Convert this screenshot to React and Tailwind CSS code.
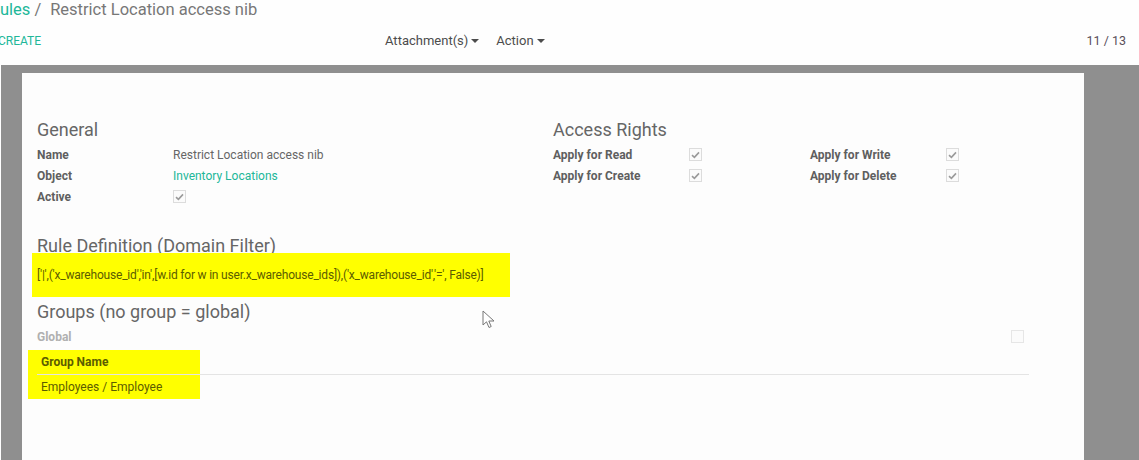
import React from "react";

function Check({ on = true, faint = false }) {
  return (
    <div
      className={`w-[13px] h-[13px] border ${faint ? "border-[#e6e6e6]" : "border-[#dcdcdc]"} bg-[#fbfbfb] flex items-center justify-center`}
    >
      {on && (
        <svg width="9" height="8" viewBox="0 0 9 8">
          <path d="M1 4.2 L3.4 6.4 L8 1.4" fill="none" stroke="#9a9a9a" strokeWidth="1.6" />
        </svg>
      )}
    </div>
  );
}

function Caret() {
  return <span className="inline-block w-0 h-0 ml-[3px] border-x-[4px] border-x-transparent border-t-[4px] border-t-[#4c4c4c] align-middle" />;
}

function Row({ label, children, labelW = "w-[136px]" }) {
  return (
    <div className="h-[21px] flex items-center">
      <div className={`${labelW} text-[12px] font-bold text-[#5f5f5f]`}>{label}</div>
      <div className="text-[12px] text-[#666]">{children}</div>
    </div>
  );
}

export default function App() {
  return (
    <div className="w-[1139px] h-[460px] overflow-hidden bg-white font-['Roboto',sans-serif] relative">
      {/* control panel */}
      <div className="h-[65px] bg-[#fefefe]">
        <div className="h-[21px] flex items-center text-[16.5px] text-[#777]">
          <span className="text-[#21b799]">ules</span>
          <span className="ml-[4px]">/</span>
          <span className="ml-[9px]">Restrict Location access nib</span>
        </div>
        <div className="h-[40px] flex items-center">
          <span className="-ml-[2px] text-[12px] text-[#21b799] w-[387px]">CREATE</span>
          <span className="text-[13px] text-[#4c4c4c] flex items-center">
            Attachment(s)
            <Caret />
          </span>
          <span className="ml-[17px] text-[13px] text-[#4c4c4c] flex items-center">
            Action
            <Caret />
          </span>
          <span className="ml-auto mr-[13px] text-[12.5px] text-[#5a4f5a]">11 / 13</span>
        </div>
      </div>

      {/* sheet background */}
      <div className="ml-[1px] h-[395px] bg-[#8f8f8f] pl-[21px] pt-[8px]">
        <div className="w-[1062px] h-[400px] bg-[#fdfdfd] pl-[15px] pt-[45px]">
          <div className="flex">
            <div className="w-[516px]">
              <div className="h-[24px] text-[18px] leading-[24px] text-[#666]">General</div>
              <div className="mt-[2px]">
                <Row label="Name">Restrict Location access nib</Row>
                <Row label="Object">
                  <span className="text-[#21b799]">Inventory Locations</span>
                </Row>
                <Row label="Active">
                  <Check />
                </Row>
              </div>
            </div>
            <div className="flex-1">
              <div className="h-[24px] text-[18px] leading-[24px] text-[#666]">Access Rights</div>
              <div className="mt-[2px] flex">
                <div className="w-[257px]">
                  <Row label="Apply for Read"><Check /></Row>
                  <Row label="Apply for Create"><Check /></Row>
                </div>
                <div>
                  <Row label="Apply for Write"><Check /></Row>
                  <Row label="Apply for Delete"><Check /></Row>
                </div>
              </div>
            </div>
          </div>

          <div className="mt-[27px] h-[19px] text-[18px] leading-[24px] text-[#666]">
            Rule Definition (Domain Filter)
          </div>
          <div className="relative -ml-[5px] w-[478px] h-[44px] bg-[#ffff00] flex items-center pl-[5px] text-[12px] text-[#5c5c00] tracking-[-0.2px]">
            ['|',('x_warehouse_id','in',[w.id for w in user.x_warehouse_ids]),('x_warehouse_id','=', False)]
          </div>

          <div className="mt-[3px] h-[24px] text-[18px] leading-[24px] text-[#666]">
            Groups (no group = global)
          </div>
          <div className="mt-[2px] h-[21px] w-[992px] flex items-center justify-between">
            <span className="text-[12px] font-bold text-[#b0b0b0]">Global</span>
            <span className="mr-[5px]">
              <Check on={false} faint />
            </span>
          </div>

          <div className="relative mt-[3px] w-[992px]">
            <div className="absolute -left-[9px] top-0 w-[172px] h-[49px] bg-[#ffff00]" />
            <div className="relative h-[25px] flex items-center pl-[4px] border-b border-[#e4e4e4] text-[12px] font-bold text-[#5c5c00]">
              Group Name
            </div>
            <div className="relative h-[24px] flex items-center pl-[4px] text-[12px] text-[#5c5c00]">
              Employees / Employee
            </div>
          </div>
        </div>
      </div>

      {/* mouse cursor */}
      <svg className="absolute left-[482px] top-[310px]" width="14" height="20" viewBox="0 0 14 20">
        <path
          d="M1 1 L1 15 L4.5 11.8 L7 17.5 L9.2 16.5 L6.8 11 L12 11 Z"
          fill="#fff"
          stroke="#777"
          strokeWidth="1"
          strokeLinejoin="round"
        />
      </svg>
    </div>
  );
}
